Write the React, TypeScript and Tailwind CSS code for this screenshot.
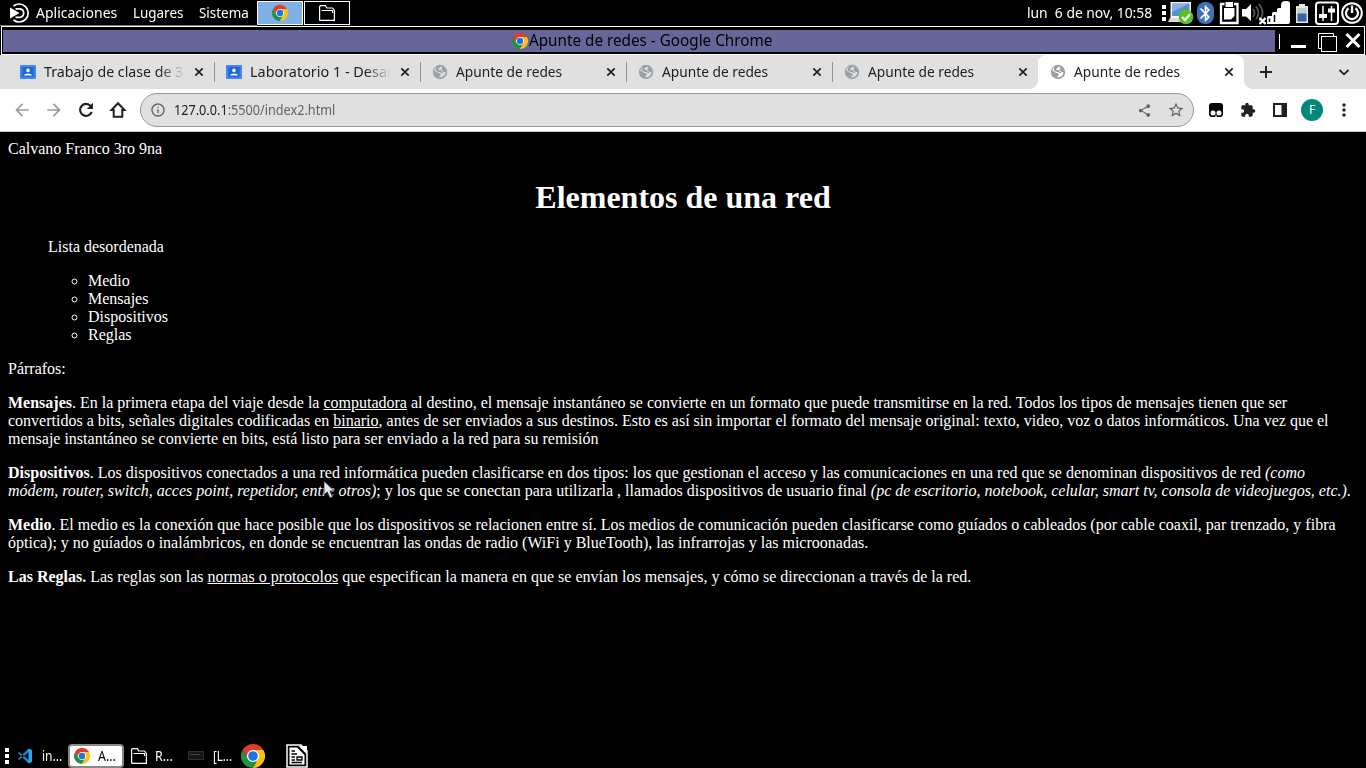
import { useLayoutEffect, useRef, type ReactNode } from "react";
import {
  MdArrowBack, MdArrowForward, MdInfoOutline, MdShare,
  MdStarBorder, MdExtension, MdMoreVert, MdBluetooth,
} from "react-icons/md";

/** Condenses a run of text so that it takes exactly `w` pixels. */
function Fit({ w, className = "", children }: { w: number; className?: string; children: ReactNode }) {
  const ref = useRef<HTMLSpanElement>(null);
  useLayoutEffect(() => {
    const el = ref.current;
    if (el) el.style.transform = `scaleX(${w / el.offsetWidth})`;
  }, [w]);
  return (
    <span className={`block shrink-0 ${className}`} style={{ width: w }}>
      <span ref={ref} className="inline-block origin-left whitespace-nowrap">{children}</span>
    </span>
  );
}

function Chrome({ className }: { className: string }) {
  return (
    <svg viewBox="0 0 24 24" className={`shrink-0 ${className}`}>
      <circle cx="12" cy="12" r="7" fill="#fff" />
      <path fill="#e33b2e" d="M12 6H22.4A12 12 0 0 0 1.6 6L6.8 15A6 6 0 0 1 12 6Z" />
      <path fill="#229342" d="M1.6 6L6.8 15A6 6 0 0 0 17.2 15L12 24A12 12 0 0 1 1.6 6Z" />
      <path fill="#fbc116" d="M12 6H22.4A12 12 0 0 1 12 24L17.2 15A6 6 0 0 0 12 6Z" />
      <circle cx="12" cy="12" r="4.8" fill="#1a73e8" />
    </svg>
  );
}

function Folder({ className }: { className: string }) {
  return (
    <svg viewBox="0 0 16 16" fill="none" stroke="#fff" strokeWidth="1.2" className={`shrink-0 ${className}`}>
      <path d="M.6 15.4V1.6L1.6.6H6.4L7.8 3H13.4L15.4 5.5V15.4H.6M2.5 5.5H13.5V8" />
    </svg>
  );
}

function Contact() {
  return (
    <svg viewBox="0 0 16 16" className="size-4 shrink-0">
      <rect y="1" width="16" height="14" rx="1" fill="#4285f4" />
      <rect x="2.5" y="3" width="11" height="10" fill="#1967d2" />
      <circle cx="8" cy="6.4" r="1.8" fill="#fff" />
      <path d="M4 11.5C4 8.7 12 8.7 12 11.5Z" fill="#fff" />
    </svg>
  );
}

function Globe({ active }: { active?: boolean }) {
  return (
    <svg viewBox="0 0 16 16" className="size-4 shrink-0">
      <circle cx="8" cy="8" r="7.2" fill="#9aa0a6" />
      <path
        fill={active ? "#fff" : "#e0e0e0"}
        d="M9.300 2.400C7.500 2.600 8 4 7 4.300C5.800 4.600 6.300 5.800 6.900 6.100H8.900C9.600 6.400 9.200 7.700 10.200 8C11.200 8.200 12.300 7.700 13.500 8.300C13.200 11.300 10.600 13.600 7.500 13.500V11.800C8.500 11.600 9.300 10.800 8.600 9.900C7.600 8.900 6.600 9.200 5.400 8.600L4.200 7.300H2.500C2.200 5 3.500 3.400 5 2.800L3.600 5L3.900 6.300L6 7.800L8 8L9 8.800L11 8.900L11.300 8L9.200 5.300L10.500 4.300Z"
      />
    </svg>
  );
}

const tabs = [
  { kind: "doc", title: "Trabajo de clase de 3", w: 139 },
  { kind: "doc", title: "Laboratorio 1 - Desar", w: 143 },
  { kind: "web", title: "Apunte de redes", w: 106 },
  { kind: "web", title: "Apunte de redes", w: 106 },
  { kind: "web", title: "Apunte de redes", w: 106 },
  { kind: "web", title: "Apunte de redes", w: 106, active: true },
];

function TopPanel() {
  return (
    <div className="flex h-[26px] items-center bg-black text-[14.5px] leading-6 text-white">
      <div className="flex h-full w-[257px] items-center border-b border-[#777]">
        <svg viewBox="0 0 22 20" fill="none" stroke="#fff" strokeWidth="1.7" className="ml-[9px] mr-[5px] h-5 w-[22px]">
          <path d="M4.500 3A9 9 0 1 1 4.500 17" />
          <path d="M6.500 5.800H11A4.300 4.300 0 0 1 11 14.300H6.500" />
          <path d="M1 4.500L10.500 10L1 15.500Z" fill="#fff" stroke="none" />
        </svg>
        <Fit w={81} className="-mt-px">Aplicaciones</Fit>
        <Fit w={50} className="-mt-px ml-4">Lugares</Fit>
        <Fit w={50} className="-mt-px ml-[15.5px]">Sistema</Fit>
      </div>
      <div className="flex h-6 w-[46px] items-center justify-center border border-white bg-[#80b1e6]"><Chrome className="size-4" /></div>
      <div className="ml-px flex h-6 w-[46px] items-center justify-center border border-white"><Folder className="size-4" /></div>
      <div className="flex-1" />
      <Fit w={125} className="-mt-[2px]"><span className="whitespace-pre">lun  6 de nov, 10:58</span></Fit>
      <svg viewBox="0 0 4 20" fill="#fff" className="ml-[10px] h-5 w-1">
        <path d="M0 2h4v4H0ZM0 8h4v4H0ZM0 14h4v4H0Z" />
      </svg>
      <svg viewBox="0 0 26 24" className="ml-[2px] h-6 w-[26px]">
        <path d="M2.500 1H23V17H2.500Z" fill="#f4f4f2" />
        <path d="M4 2.500H21.500V15H4Z" fill="#5a8fc8" />
        <path d="M4 2.500H21.500L4 11Z" fill="#89b3de" />
        <path d="M2 17H23L24 21H0Z" fill="#d7d9d5" />
        <circle cx="18" cy="16" r="7.300" fill="#5cbf22" />
        <path d="M14 16L17 19L22 13.300" fill="none" stroke="#fff" strokeWidth="2.400" />
      </svg>
      <div className="ml-[3px] flex h-[22px] w-[17px] items-center justify-center rounded-[8px] bg-[#3e72b5] text-white"><MdBluetooth className="size-[19px] shrink-0" /></div>
      <svg viewBox="0 0 20 24" fill="none" className="ml-[5px] h-6 w-5">
        <path d="M5.500 3H2V22H18.500V3H15" stroke="#fff" strokeWidth="2.300" />
        <path d="M6.500 1H14V6H6.500Z" fill="#fff" />
        <path d="M5 7H15.500V15L12 18.500H5Z" fill="#fff" />
      </svg>
      <svg viewBox="0 0 24 24" className="ml-[3px] h-6 w-6">
        <path d="M0 8H4L9 3V20L4 15.500H0Z" fill="#fff" />
        <path d="M11 8Q14 12 11 16M14 5.500Q19 12 14 18M17 3Q24 12 17 20" fill="none" stroke="#555" strokeWidth="1.800" />
        <path d="M17.500 17L23.500 23M23.500 17L17.500 23" stroke="#fff" strokeWidth="2.300" />
      </svg>
      <svg viewBox="0 0 24 24" fill="#fff" className="h-6 w-6">
        <path d="M1 16.500Q1 15 2.500 15H6V23H1ZM6 12.500Q6 11 7.500 11H11V23H6ZM11 8.500Q11 7 12.500 7H16V23H11ZM15 4.500Q15 0 19 0H21Q24 0 24 3V21Q24 23 22 23H15Z" />
        <path d="M3.500 17.500V21M8.500 14V21" stroke="#000" strokeWidth="1.500" />
      </svg>
      <svg viewBox="0 0 14 20" className="ml-[5px] h-5 w-[14px]">
        <path d="M4 1H10V3H13V20H1V3H4Z" fill="#e8e8e5" />
        <path d="M2.500 5H11.500V18.500H2.500Z" fill="#c6cbd2" />
        <path d="M2.500 10.500H11.500V18.500H2.500Z" fill="#3465a4" />
      </svg>
      <svg viewBox="0 0 24 24" fill="none" stroke="#fff" className="ml-[6px] h-6 w-6">
        <rect x="1" y="1.500" width="22" height="21.500" rx="3" strokeWidth="2" />
        <path d="M8 5V20M16.500 5V20" strokeWidth="1.500" />
        <path d="M4 15H12M13 9.500H20" strokeWidth="4" />
      </svg>
      <svg viewBox="0 0 22 22" fill="none" stroke="#fff" className="ml-[2px] mr-[3px] size-[22px]">
        <circle cx="11" cy="11" r="9.800" strokeWidth="2" />
        <path d="M7.500 6.200A6 6 0 1 0 14.500 6.200M11 3.500V11" strokeWidth="2.300" />
      </svg>
    </div>
  );
}

function TitleBar() {
  return (
    <div className="h-[29px] bg-black pl-px">
      <div className="flex h-[29px] w-[1364px] items-start border border-white pl-px pt-[3px]">
        <div className="flex h-[22px] w-[1272px] items-center justify-center bg-[#666699] pl-[5px] text-[15.5px] leading-[18px] text-black">
          <Chrome className="size-4" /><Fit w={243} className="-mt-[3px] ml-[1px]">Apunte de redes - Google Chrome</Fit>
        </div>
        <svg viewBox="0 0 86 23" fill="none" stroke="#fff" className="h-[23px] w-[86px]">
          <path d="M4.500 4V19" />
          <path d="M16 16.500H31" strokeWidth="3" />
          <path d="M43.500 18.500V3.500H58.500V6.500M43.500 18.500H47" />
          <rect x="46.500" y="6.500" width="15" height="15" fill="#000" />
          <path d="M71.500 4L84.500 17M84.500 4L71.500 17" strokeWidth="3" />
        </svg>
      </div>
    </div>
  );
}

function TabStrip() {
  return (
    <div className="flex h-[34px] items-center bg-[#e0e0e0] pl-2 text-[14px] leading-[34px] text-[#202124]">
      {tabs.map((t, i) => (
        <div key={i} className={`relative flex h-[34px] w-[206px] shrink-0 items-center pl-3 ${t.active ? "rounded-t-lg bg-white" : ""}`}>
          {t.active && (
            <>
              <span className="absolute -left-2 bottom-0 size-2 bg-[radial-gradient(circle_at_0_0,#e0e0e0_7.5px,#fff_8px)]" />
              <span className="absolute -right-2 bottom-0 size-2 bg-[radial-gradient(circle_at_100%_0,#e0e0e0_7.5px,#fff_8px)]" />
            </>
          )}
          {t.kind === "doc" ? <Contact /> : <Globe active={t.active} />}
          <div className={`ml-2 w-[139px] overflow-hidden ${t.kind === "doc" ? "[mask-image:linear-gradient(to_right,#000_115px,transparent_141px)]" : ""}`}>
            <Fit w={t.w}>{t.title}</Fit>
          </div>
          <svg viewBox="0 0 14 14" className="ml-[9px] size-[14px]">
            <path d="M3.300 3.300L10.700 10.700M10.700 3.300L3.300 10.700" stroke="#202124" strokeWidth="1.700" />
          </svg>
          {i < 4 && <span className="ml-auto h-5 w-px translate-x-px bg-[#909193]" />}
        </div>
      ))}
      <svg viewBox="0 0 20 20" className="ml-3 size-5">
        <path d="M10 4V16M4 10H16" stroke="#202124" strokeWidth="2" />
      </svg>
      <svg viewBox="0 0 18 18" className="ml-auto mr-[13px] size-[18px]">
        <path d="M4.500 7L9 11.300L13.500 7" fill="none" stroke="#202124" strokeWidth="1.800" />
      </svg>
    </div>
  );
}

function Toolbar() {
  return (
    <div className="flex h-[43px] items-center border-b border-[#c5c5c5] bg-white text-[#202124]">
      <MdArrowBack className="ml-3 size-5 text-[#9b9b9b]" />
      <MdArrowForward className="ml-3 size-5 text-[#9b9b9b]" />
      <svg viewBox="0 0 20 20" className="ml-3 size-5">
        <path d="M14.700 6A6 6 0 1 0 15.700 12" fill="none" stroke="#202124" strokeWidth="2.100" />
        <path d="M17 2.800V9H10.800Z" fill="#202124" />
      </svg>
      <svg viewBox="0 0 20 20" className="ml-3 size-5">
        <path d="M10 3.200L3.500 10H5.700V16.700H14.300V10H16.500Z" fill="none" stroke="#202124" strokeWidth="2" />
      </svg>
      <div className="ml-3 flex h-[34px] w-[1054px] items-center rounded-full border border-[#999] bg-[#e0e0e0] text-[14px] leading-8 text-[#5f6368]">
        <MdInfoOutline className="ml-[9px] size-4" />
        <Fit w={161} className="ml-2"><span className="text-[#202124]">127.0.0.1</span>:5500/index2.html</Fit>
        <MdShare className="ml-auto size-[15px]" />
        <MdStarBorder className="ml-[15px] mr-2 size-[18px]" />
      </div>
      <svg viewBox="0 0 16 16" className="ml-[14px] size-4">
        <rect x="1" y="1" width="14" height="14" rx="3" fill="#000" />
        <circle cx="5" cy="11" r="2.500" fill="#fff" /><circle cx="11" cy="11" r="2.500" fill="#fff" />
        <path d="M7 15.200L8 12.500L9 15.200Z" fill="#fff" />
      </svg>
      <MdExtension className="ml-4 size-4" />
      <svg viewBox="0 0 16 16" className="ml-4 size-4">
        <path fillRule="evenodd" d="M1 1H15V15H1ZM3 3V13H9.500V3Z" fill="#202124" />
      </svg>
      <div className="ml-[13px] flex size-[22px] items-center justify-center rounded-full bg-[#00897b] text-[12px] text-white">F</div>
      <MdMoreVert className="ml-[11px] size-5" />
    </div>
  );
}

function Page() {
  return (
    <main className="relative h-[612px] bg-black px-2 pt-2 font-['Liberation_Serif',serif] text-[16px] leading-[18px] text-white">
      <p>Calvano Franco 3ro 9na</p>
      <h1 className="mt-[21px] text-center text-[32px] font-bold leading-[37px]">Elementos de una red</h1>
      <p className="ml-10 mt-[22px]">Lista desordenada</p>
      <ul className="mt-4 list-[circle] pl-20">
        <li>Medio</li><li>Mensajes</li><li>Dispositivos</li><li>Reglas</li>
      </ul>
      <p className="mt-4">Párrafos:</p>
      <p className="mt-4">
        <b>Mensajes</b>. En la primera etapa del viaje desde la <u>computadora</u> al destino, el mensaje instantáneo se convierte en un formato que puede transmitirse en la red. Todos los tipos de mensajes tienen que ser convertidos a bits, señales digitales codificadas en <u>binario</u>, antes de ser enviados a sus destinos. Esto es así sin importar el formato del mensaje original: texto, video, voz o datos informáticos. Una vez que el mensaje instantáneo se convierte en bits, está listo para ser enviado a la red para su remisión
      </p>
      <p className="mt-4">
        <b>Dispositivos</b>. Los dispositivos conectados a una red informática pueden clasificarse en dos tipos: los que gestionan el acceso y las comunicaciones en una red que se denominan dispositivos de red <i>(como módem, router, switch, acces point, repetidor, entre otros)</i>; y los que se conectan para utilizarla , llamados dispositivos de usuario final <i>(pc de escritorio, notebook, celular, smart tv, consola de videojuegos, etc.)</i>.
      </p>
      <p className="mt-4">
        <b>Medio</b>. El medio es la conexión que hace posible que los dispositivos se relacionen entre sí. Los medios de comunicación pueden clasificarse como guíados o cableados (por cable coaxil, par trenzado, y fibra óptica); y no guíados o inalámbricos, en donde se encuentran las ondas de radio (WiFi y BlueTooth), las infrarrojas y las microonadas.
      </p>
      <p className="mt-4">
        <b>Las Reglas.</b> Las reglas son las <u>normas o protocolos</u> que especifican la manera en que se envían los mensajes, y cómo se direccionan a través de la red.
      </p>
      <svg viewBox="0 0 12 19" className="absolute left-[323px] top-[348px] h-[19px] w-3">
        <path d="M1 1V15L4.300 12L7 18L9.500 17L7 11H11.500Z" fill="#e6e6e6" stroke="#222" strokeWidth=".8" />
      </svg>
    </main>
  );
}

function Taskbar() {
  return (
    <div className="flex h-6 items-center bg-black text-[14.5px] leading-[22px] text-white">
      <svg viewBox="0 0 4 18" fill="#fff" className="ml-[5px] h-[18px] w-1"><path d="M0 1h4v4H0ZM0 7h4v4H0ZM0 13h4v4H0Z" /></svg>
      <svg viewBox="0 0 16 16" className="ml-[8px] size-4">
        <path d="M1 5L2.200 4L12 12V15.500L11 15ZM1 11L2.200 12L12 4V.500L11 1Z" fill="#1684cb" />
        <path d="M11.500 .500L15 2V14L11.500 15.500Z" fill="#29a7ef" />
      </svg>
      <Fit w={20} className="-mt-[2px] ml-[9px]">in...</Fit>
      <div className="ml-[6px] flex h-6 w-14 items-center rounded-sm border-2 border-[#888] bg-white text-black">
        <Chrome className="ml-[4px] size-4" /><Fit w={18} className="-mt-[2px] ml-2">A...</Fit>
      </div>
      <Folder className="ml-[7px] size-4" />
      <Fit w={18} className="-mt-[2px] ml-2">R...</Fit>
      <svg viewBox="0 0 16 10" className="ml-[15px] h-[10px] w-4"><rect x=".500" y=".500" width="15" height="8" fill="#151515" stroke="#303030" /><path d="M2 3.500H12" stroke="#444" /></svg>
      <Fit w={19} className="-mt-[2px] ml-[9px]">[L...</Fit>
      <Chrome className="ml-[9px] size-6" />
      <svg viewBox="0 0 22 24" className="ml-[21px] h-6 w-[22px]">
        <path d="M1 1H15L21 7V23H1Z" fill="#000" stroke="#fff" strokeWidth="1.500" />
        <path d="M3.500 3.500H11L18.500 11V20.500H3.500Z" fill="#fff" />
        <path d="M5.500 7H9M5.500 10H11M5.500 13H9M5.500 16H9M5.500 18.500H16M11 13H16V16H11Z" stroke="#000" fill="none" strokeWidth="1.300" />
        <path d="M12.500 2H21V10.500Z" fill="#fff" />
      </svg>
    </div>
  );
}

export default function App() {
  return (
    <div className="h-[768px] w-[1366px] overflow-hidden bg-black font-['Noto_Sans',sans-serif]">
      <TopPanel />
      <TitleBar />
      <TabStrip />
      <Toolbar />
      <Page />
      <Taskbar />
    </div>
  );
}
